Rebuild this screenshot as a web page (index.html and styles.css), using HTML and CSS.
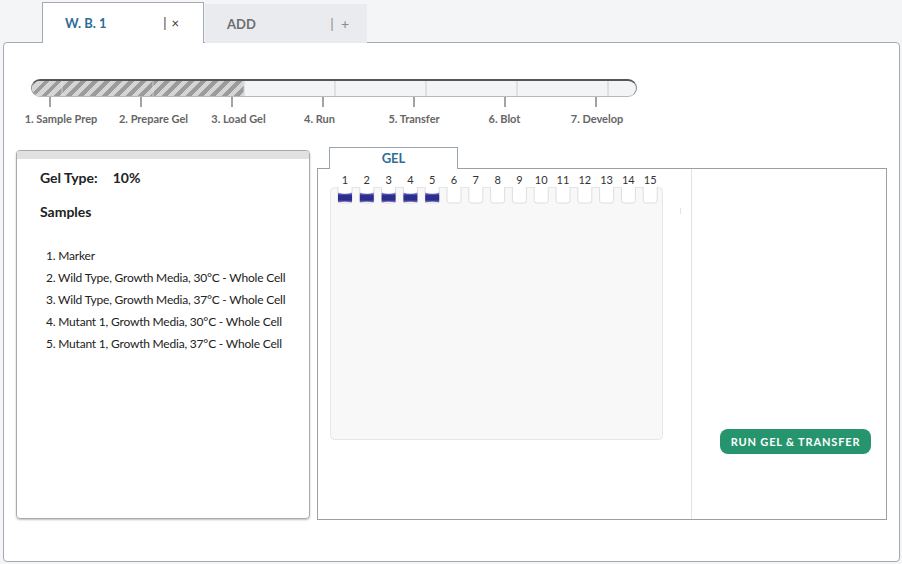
FILE: index.html
```html
<!DOCTYPE html>
<html>
<head>
<meta charset="utf-8">
<link rel="stylesheet" href="styles.css">
</head>
<body>
<div class="tabs">
  <div class="tab tab-active"><span class="tab-title">W. B. 1</span><span class="tab-ctl"><span>|</span><span>×</span></span></div>
  <div class="tab tab-add"><span class="tab-title">ADD</span><span class="tab-ctl"><span>|</span><span>+</span></span></div>
</div>
<main class="panel">
  <section class="progress">
    <div class="bar"><div class="bar-fill"></div></div>
    <div class="ticks"><i></i><i></i><i></i><i></i><i></i><i></i><i></i></div>
    <div class="steps">
      <span>1. Sample Prep</span>
      <span>2. Prepare Gel</span>
      <span>3. Load Gel</span>
      <span>4. Run</span>
      <span>5. Transfer</span>
      <span>6. Blot</span>
      <span>7. Develop</span>
    </div>
  </section>
  <section class="content">
    <div class="info">
      <div class="info-head"></div>
      <div class="info-body">
        <div class="geltype"><span>Gel Type:</span><span>10%</span></div>
        <h2 class="samples-title">Samples</h2>
        <ul class="samples">
          <li>1. Marker</li>
          <li>2. Wild Type, Growth Media, 30°C - Whole Cell</li>
          <li>3. Wild Type, Growth Media, 37°C - Whole Cell</li>
          <li>4. Mutant 1, Growth Media, 30°C - Whole Cell</li>
          <li>5. Mutant 1, Growth Media, 37°C - Whole Cell</li>
        </ul>
      </div>
    </div>
    <div class="gel-section">
      <div class="gel-tab">GEL</div>
      <div class="gel-box">
        <div class="gel-left">
          <div class="lanes">
            <span>1</span><span>2</span><span>3</span><span>4</span><span>5</span>
            <span>6</span><span>7</span><span>8</span><span>9</span><span>10</span>
            <span>11</span><span>12</span><span>13</span><span>14</span><span>15</span>
          </div>
          <div class="gel-row">
            <div class="gel">
              <svg width="334" height="254" viewBox="0 0 334 254">
                <defs>
                  <rect id="well" x="-7" y="-4" width="14" height="20" rx="2.5" fill="#ffffff" stroke="#dedede" stroke-width="1"/>
                  <linearGradient id="bandg" x1="0" y1="0" x2="0" y2="1">
                    <stop offset="0" stop-color="#a49ad9"/>
                    <stop offset="0.3" stop-color="#2c2f8f"/>
                    <stop offset="0.75" stop-color="#2a2d8a"/>
                    <stop offset="1" stop-color="#8f86cf"/>
                  </linearGradient>
                  <path id="band" d="M-7,5.5 Q0,8 7,5.5 L7,15.5 Q0,14 -7,15.5 Z" fill="url(#bandg)"/>
                </defs>
                <rect x="0.5" y="0.5" width="332" height="252" rx="4" fill="#f8f8f8" stroke="#e6e6e6"/>
                <g transform="translate(15,0)">
                  <use href="#well" x="0"/>
                  <use href="#well" x="21.8"/>
                  <use href="#well" x="43.6"/>
                  <use href="#well" x="65.4"/>
                  <use href="#well" x="87.2"/>
                  <use href="#well" x="109"/>
                  <use href="#well" x="130.8"/>
                  <use href="#well" x="152.6"/>
                  <use href="#well" x="174.4"/>
                  <use href="#well" x="196.2"/>
                  <use href="#well" x="218"/>
                  <use href="#well" x="239.8"/>
                  <use href="#well" x="261.6"/>
                  <use href="#well" x="283.4"/>
                  <use href="#well" x="305.2"/>
                  <use href="#band" x="0"/>
                  <use href="#band" x="21.8"/>
                  <use href="#band" x="43.6"/>
                  <use href="#band" x="65.4"/>
                  <use href="#band" x="87.2"/>
                </g>
              </svg>
            </div>
            <span class="gel-mark"></span>
          </div>
        </div>
        <div class="gel-right">
          <button class="run">RUN GEL &amp; TRANSFER</button>
        </div>
      </div>
    </div>
  </section>
</main>
</body>
</html>
```
FILE: styles.css
```css
html, body {
  margin: 0;
}
body {
  padding-top: 2px;
  background: #f4f5f7;
  font-family: Lato, "Liberation Sans", sans-serif;
  color: #222;
  width: 902px;
  height: 564px;
  overflow: hidden;
  box-sizing: border-box;
}

/* tabs */
.tabs {
  display: flex;
  align-items: flex-end;
  gap: 1px;
  padding-left: 42px;
  height: 41px;
  margin-bottom: -1px;
  position: relative;
  z-index: 1;
}
.tab {
  box-sizing: border-box;
  width: 162px;
  display: flex;
  align-items: center;
  justify-content: space-between;
  padding-left: 22px;
  font-size: 13px;
}
.tab-title {
  font-weight: 700;
}
.tab-ctl {
  display: flex;
  align-items: center;
}
.tab-active {
  height: 41px;
  background: #fff;
  border: 1px solid #a4abb2;
  border-bottom: none;
  color: #2e6d96;
  padding-right: 24px;
}
.tab-active .tab-ctl {
  color: #333;
  gap: 5px;
}
.tab-add {
  height: 39px;
  background: #e9ebee;
  color: #6e6e6e;
  padding-right: 18px;
}
.tab-add .tab-ctl {
  color: #8a8a8a;
  gap: 7px;
  font-size: 14px;
}

/* panel */
.panel {
  display: block;
  margin: 0 2px 0 3px;
  height: 520px;
  box-sizing: border-box;
  border: 1px solid #a4abb2;
  border-radius: 4px;
  background: #fff;
}

/* progress */
.progress {
  padding: 36px 0 0 27px;
}
.bar {
  width: 606px;
  height: 18px;
  box-sizing: border-box;
  border: 1px solid #8c8c8c;
  border-top: 2px solid #555;
  border-bottom: 1px solid #b8b8b8;
  border-radius: 9px;
  overflow: hidden;
  display: flex;
  background:
    repeating-linear-gradient(90deg, transparent 0 29px, rgba(200, 200, 200, 0.45) 29px 31px, transparent 31px 91px),
    #f3f4f5;
}
.bar-fill {
  width: 212px;
  background:
    repeating-linear-gradient(90deg, transparent 0 29px, rgba(230, 230, 230, 0.35) 29px 31px, transparent 31px 91px),
    repeating-linear-gradient(135deg, #9b9b9b 0 4.2px, #d5d5d5 4.2px 8.5px);
}
.ticks {
  display: flex;
  gap: 89px;
  padding-left: 18px;
  height: 10px;
}
.ticks i {
  width: 2px;
  background: #a3a3a3;
}
.steps {
  display: grid;
  grid-template-columns: 90px 95px 75px 87px 102px 79px 106px;
  margin-left: -15px;
  margin-top: 6px;
  font-size: 11px;
  line-height: 12px;
  text-align: center;
  color: #666;
  font-weight: 700;
  white-space: nowrap;
}

/* content */
.content {
  display: flex;
  align-items: flex-start;
  padding-left: 12px;
  margin-top: 22px;
}
.info {
  width: 294px;
  height: 369px;
  box-sizing: border-box;
  margin-top: 3px;
  border: 1px solid #a9a9a9;
  border-radius: 4px;
  box-shadow: 0 1px 2px rgba(0, 0, 0, 0.25);
  overflow: hidden;
}
.info-head {
  height: 8px;
  background: #e1e1e1;
}
.info-body {
  padding: 10px 0 0 23px;
}
.geltype {
  display: flex;
  gap: 15px;
  font-size: 14px;
  line-height: 18px;
  font-weight: 700;
}
.samples-title {
  margin: 16px 0 0;
  font-size: 14px;
  line-height: 18px;
  font-weight: 700;
}
.samples {
  list-style: none;
  margin: 24px 0 0;
  padding: 0 0 0 6px;
  font-size: 12px;
  line-height: 22px;
  letter-spacing: -0.2px;
  white-space: nowrap;
}

/* gel */
.gel-section {
  margin-left: 7px;
}
.gel-tab {
  margin-left: 12px;
  width: 129px;
  height: 22px;
  box-sizing: border-box;
  border: 1px solid #9aa4ac;
  border-bottom: none;
  background: #fff;
  text-align: center;
  line-height: 21px;
  font-size: 13px;
  font-weight: 700;
  color: #2f6e95;
  position: relative;
  z-index: 1;
  margin-bottom: -1px;
}
.gel-box {
  display: flex;
  width: 570px;
  height: 352px;
  box-sizing: border-box;
  border: 1px solid #9aa0a6;
}
.gel-left {
  width: 374px;
  box-sizing: border-box;
  border-right: 1px solid #e2e2e2;
  padding-left: 12px;
}
.lanes {
  display: grid;
  grid-template-columns: repeat(15, 21.8px);
  padding: 4px 0 0 4.1px;
  height: 18px;
  box-sizing: border-box;
  font-size: 11px;
  line-height: 14px;
  text-align: center;
  color: #333;
}
.gel-row {
  display: flex;
  align-items: flex-start;
}
.gel svg {
  display: block;
}
.gel-mark {
  width: 1px;
  height: 6px;
  margin: 21px 0 0 16px;
  background: #e4e4e4;
}
.gel-right {
  flex: 1;
  padding: 260px 0 0 28px;
}
.run {
  width: 151px;
  height: 25px;
  padding: 0;
  border: none;
  border-radius: 8px;
  background: #26946d;
  color: #fff;
  font-family: Lato, "Liberation Sans", sans-serif;
  font-size: 11px;
  font-weight: 700;
  letter-spacing: 0.85px;
}
```
